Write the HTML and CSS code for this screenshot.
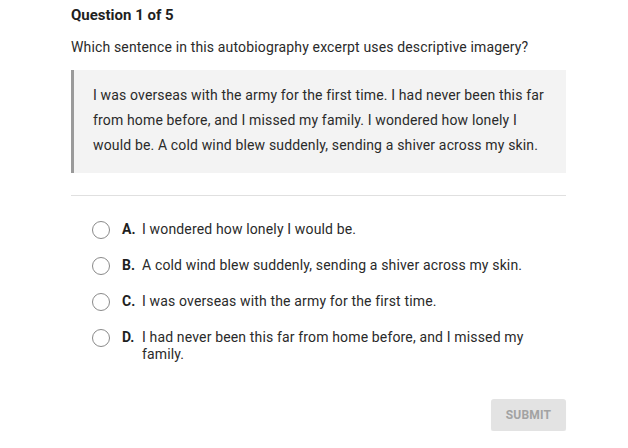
FILE: index.html
```html
<!DOCTYPE html>
<html>
<head>
<meta charset="utf-8">
<link rel="stylesheet" href="styles.css">
</head>
<body>
<div class="quiz">
  <h1 class="title">Question 1 of 5</h1>
  <p class="prompt">Which sentence in this autobiography excerpt uses descriptive imagery?</p>
  <blockquote class="excerpt">I was overseas with the army for the first time. I had never been this far from home before, and I missed my family. I wondered how lonely I would be. A cold wind blew suddenly, sending a shiver across my skin.</blockquote>
  <hr class="divider">
  <ul class="options">
    <li class="option"><span class="radio"></span><span class="letter">A.</span><span class="text">I wondered how lonely I would be.</span></li>
    <li class="option"><span class="radio"></span><span class="letter">B.</span><span class="text">A cold wind blew suddenly, sending a shiver across my skin.</span></li>
    <li class="option"><span class="radio"></span><span class="letter">C.</span><span class="text">I was overseas with the army for the first time.</span></li>
    <li class="option"><span class="radio"></span><span class="letter">D.</span><span class="text">I had never been this far from home before, and I missed my family.</span></li>
  </ul>
  <div class="actions"><button class="submit">SUBMIT</button></div>
</div>
</body>
</html>
```
FILE: styles.css
```css
html, body {
  margin: 0;
  padding: 0;
  background: #fff;
}
body {
  font-family: Roboto, "Liberation Sans", sans-serif;
  color: #222;
}
.quiz {
  width: 495px;
  margin-left: 71px;
  padding-top: 5px;
}
.title {
  margin: 0;
  font-size: 15px;
  line-height: 20px;
  font-weight: 700;
  color: #1f1f1f;
}
.prompt {
  margin: 12px 0 0;
  font-size: 14px;
  line-height: 20px;
  letter-spacing: 0.15px;
  color: #2a2a2a;
}
.excerpt {
  margin: 13px 0 0;
  background: #f3f3f3;
  border-left: 3px solid #9a9a9a;
  padding: 13px 20px 15px 19px;
  font-size: 14px;
  line-height: 25px;
  letter-spacing: 0.15px;
  color: #2a2a2a;
}
.divider {
  margin: 22px 0 0;
  border: 0;
  border-top: 1px solid #e0e0e0;
  height: 0;
}
.options {
  list-style: none;
  margin: 24.5px 0 0;
  padding: 0 20px 0 21px;
  display: flex;
  flex-direction: column;
  gap: 19px;
}
.option {
  display: flex;
  align-items: flex-start;
  font-size: 14px;
  line-height: 17px;
  letter-spacing: 0.15px;
  color: #2a2a2a;
}
.radio {
  flex: none;
  width: 16px;
  height: 16px;
  border: 1.2px solid #8a8a8a;
  border-radius: 50%;
  margin-top: 0;
  margin-bottom: -2px;
  margin-right: 12px;
  box-sizing: content-box;
}
.letter {
  flex: none;
  font-weight: 700;
  color: #1f1f1f;
  width: 20px;
  letter-spacing: 0;
}
.text {
  flex: 1;
}
.actions {
  display: flex;
  justify-content: flex-end;
  margin-top: 36.5px;
}
.submit {
  width: 75px;
  height: 32px;
  border: 0;
  border-radius: 3px;
  background: #e3e3e3;
  color: #a2a2a2;
  font-family: Roboto, "Liberation Sans", sans-serif;
  font-size: 12px;
  font-weight: 700;
  letter-spacing: 0.2px;
  box-shadow: 0 1px 1px rgba(0,0,0,0.06);
  padding: 0;
}
```
